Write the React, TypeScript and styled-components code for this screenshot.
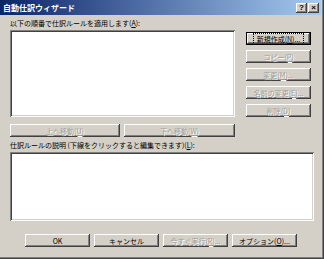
import React from 'react';
import styled, { createGlobalStyle, css } from 'styled-components';

const Global = createGlobalStyle`
  html, body {
    margin: 0;
    padding: 0;
    background: #d4d0c8;
  }
  body {
    font-family: 'Noto Sans CJK JP', 'Noto Sans', sans-serif;
    font-size: 7px;
    line-height: 10px;
  }
`;

const raised = css`
  box-shadow: inset -1px -1px #404040, inset 1px 1px #ffffff, inset -2px -2px #808080;
`;

const sunken = css`
  box-shadow: inset 1px 1px #808080, inset -1px -1px #ffffff, inset 2px 2px #404040,
    inset -2px -2px #d4d0c8;
`;

const Window = styled.div`
  box-sizing: border-box;
  width: 324px;
  height: 259px;
  padding: 0 3px 3px 0;
  display: flex;
  flex-direction: column;
  background: #d4d0c8;
  box-shadow: inset -1px -1px #404040, inset -2px -2px #808080;
`;

const TitleBar = styled.div`
  height: 15px;
  display: flex;
  align-items: center;
  justify-content: space-between;
  padding: 0 2px 0 3px;
  background: linear-gradient(to right, #0a246a, #a6caf0);
`;

const Title = styled.span`
  color: #ffffff;
  font-weight: bold;
  font-size: 8px;
`;

const CapButtons = styled.div`
  display: flex;
  gap: 1px;
`;

const CapButton = styled.div`
  width: 11px;
  height: 10px;
  display: flex;
  align-items: center;
  justify-content: center;
  background: #d4d0c8;
  color: #000000;
  font-family: 'Liberation Sans', sans-serif;
  font-weight: bold;
  font-size: 8px;
  ${raised};
`;

const Body = styled.div`
  flex: 1;
  display: flex;
  flex-direction: column;
  padding: 3px 0 0 10px;
`;

const Label = styled.div<{ $top?: number }>`
  height: 10px;
  margin-top: ${({ $top }) => $top ?? 0}px;
  color: #000000;
  white-space: nowrap;
`;

const TopRow = styled.div`
  display: flex;
  gap: 11px;
  margin-top: 2px;
`;

const LeftCol = styled.div`
  display: flex;
  flex-direction: column;
  width: 225px;
`;

const ListBox = styled.div`
  height: 87px;
  background: #ffffff;
  ${sunken};
`;

const MoveRow = styled.div`
  display: flex;
  gap: 4px;
  margin-top: 7px;
`;

const SideButtons = styled.div`
  display: flex;
  flex-direction: column;
  gap: 5px;
  margin-top: 2px;
`;

const Button = styled.div<{ $w?: number; $disabled?: boolean; $default?: boolean }>`
  box-sizing: border-box;
  width: ${({ $w }) => $w ?? 65}px;
  height: 13px;
  display: flex;
  align-items: center;
  justify-content: center;
  background: #d4d0c8;
  color: #000000;
  white-space: nowrap;
  ${raised};
  ${({ $disabled }) =>
    $disabled &&
    css`
      color: #a09c94;
      text-shadow: 1px 1px #ffffff;
    `};
  ${({ $default }) =>
    $default &&
    css`
      box-shadow: inset 0 0 0 1px #000000, inset -2px -2px #404040, inset 2px 2px #ffffff,
        inset -3px -3px #808080;
    `};
`;

const Focus = styled.span`
  outline: 1px dotted #000000;
  outline-offset: 0;
  padding: 0 3px;
`;

const DescBox = styled.div`
  width: 304px;
  height: 69px;
  margin-top: 2px;
  background: #ffffff;
  ${sunken};
`;

const Footer = styled.div`
  display: flex;
  gap: 4px;
  margin-top: 13px;
  padding-left: 15px;
`;

export default function App() {
  return (
    <>
      <Global />
      <Window>
        <TitleBar>
          <Title>自動仕訳ウィザード</Title>
          <CapButtons>
            <CapButton>?</CapButton>
            <CapButton>×</CapButton>
          </CapButtons>
        </TitleBar>
        <Body>
          <Label>
            以下の順番で仕訳ルールを適用します(<u>A</u>):
          </Label>
          <TopRow>
            <LeftCol>
              <ListBox />
              <MoveRow>
                <Button $w={110} $disabled>
                  上へ移動(<u>U</u>)
                </Button>
                <Button $w={111} $disabled>
                  下へ移動(<u>W</u>)
                </Button>
              </MoveRow>
            </LeftCol>
            <SideButtons>
              <Button $default>
                <Focus>
                  新規作成(<u>N</u>)...
                </Focus>
              </Button>
              <Button $disabled>
                コピー(<u>P</u>)
              </Button>
              <Button $disabled>
                変更(<u>M</u>)...
              </Button>
              <Button $disabled>
                名前の変更(<u>E</u>)...
              </Button>
              <Button $disabled>
                削除(<u>D</u>)
              </Button>
            </SideButtons>
          </TopRow>
          <Label $top={3}>
            仕訳ルールの説明 (下線をクリックすると編集できます)(<u>L</u>):
          </Label>
          <DescBox />
          <Footer>
            <Button>OK</Button>
            <Button>キャンセル</Button>
            <Button $disabled>
              今すぐ実行(<u>R</u>)...
            </Button>
            <Button>
              オプション(<u>O</u>)...
            </Button>
          </Footer>
        </Body>
      </Window>
    </>
  );
}
